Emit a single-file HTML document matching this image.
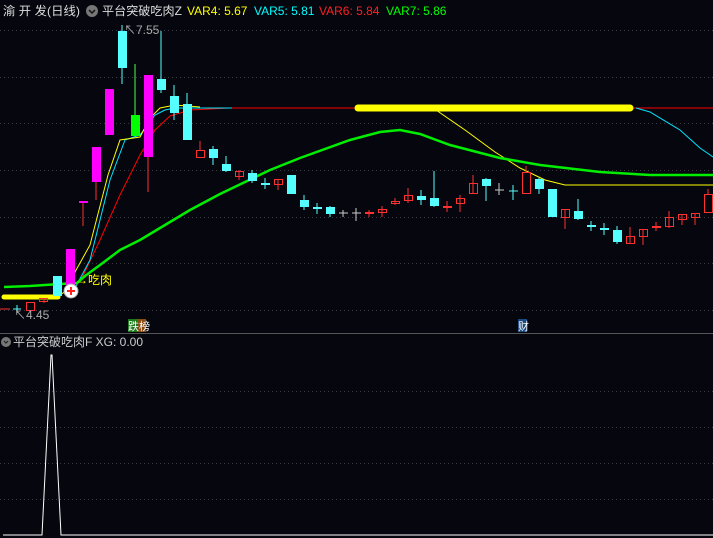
<!DOCTYPE html>
<html><head><meta charset="utf-8"><style>
html,body{margin:0;padding:0;background:#05060e;width:713px;height:538px;overflow:hidden}
svg{display:block}
text{font-family:"Liberation Sans","Noto Sans CJK SC",sans-serif}
</style></head><body>
<svg width="713" height="538" viewBox="0 0 713 538" xmlns="http://www.w3.org/2000/svg">
<rect width="713" height="538" fill="#05060e"/>
<g stroke="#3a3a44" stroke-dasharray="1,3" stroke-width="1">
<line x1="0" y1="30.5" x2="713" y2="30.5"/><line x1="0" y1="77.5" x2="713" y2="77.5"/>
<line x1="0" y1="123.5" x2="713" y2="123.5"/><line x1="0" y1="170.5" x2="713" y2="170.5"/>
<line x1="0" y1="217.5" x2="713" y2="217.5"/><line x1="0" y1="263.5" x2="713" y2="263.5"/>
<line x1="0" y1="310.5" x2="713" y2="310.5"/>
<line x1="0" y1="391.5" x2="713" y2="391.5"/><line x1="0" y1="427.5" x2="713" y2="427.5"/>
<line x1="0" y1="463.5" x2="713" y2="463.5"/><line x1="0" y1="499.5" x2="713" y2="499.5"/>
</g>
<line x1="0" y1="333.5" x2="713" y2="333.5" stroke="#555" stroke-width="1"/>
<!-- header -->
<text x="3" y="15" font-size="12" fill="#ddd" textLength="77" lengthAdjust="spacingAndGlyphs">渝 开 发(日线)</text>
<circle cx="92" cy="11" r="6" fill="#777"/><path d="M89 10l3 3 3-3" stroke="#111" stroke-width="1.5" fill="none"/>
<text x="102" y="15" font-size="12" fill="#ddd" textLength="80" lengthAdjust="spacingAndGlyphs">平台突破吃肉Z</text>
<text x="187" y="15" font-size="12" fill="#ffff00">VAR4: 5.67</text>
<text x="254" y="15" font-size="12" fill="#00ffff">VAR5: 5.81</text>
<text x="319" y="15" font-size="12" fill="#ff2020">VAR6: 5.84</text>
<text x="386" y="15" font-size="12" fill="#00ff00">VAR7: 5.86</text>
<!-- lines -->
<polyline fill="none" stroke="#ff0000" stroke-width="1" points="80,282 100,240 120,195 140,155 155,130 170,116 190,110 230,108 713,108"/>
<polyline fill="none" stroke="#00e5ff" stroke-width="1" points="75,288 90,260 110,180 125,140 140,135 155,115 165,110 175,108 232,108"/>
<polyline fill="none" stroke="#00e5ff" stroke-width="1" points="636,108 650,112 680,130 700,148 713,157"/>
<polyline fill="none" stroke="#ffff00" stroke-width="1" points="4,298 55,297 65,292 75,272 90,245 108,175 120,140 140,137 150,118 160,108 175,105 200,107"/>
<polyline fill="none" stroke="#ffff00" stroke-width="1" points="436,110 465,130 495,152 520,168 545,180 565,185 713,185"/>
<polyline fill="none" stroke="#00ee00" stroke-width="2.5" points="4,287 30,286 60,284 77,283 85,276 100,265 120,250 140,240 160,228 190,210 220,194 245,182 270,170 300,158 350,140 380,132 400,130 420,134 450,145 500,158 540,165 600,172 650,175 713,175"/>
<line x1="358" y1="108" x2="630" y2="108" stroke="#ffff00" stroke-width="7" stroke-linecap="round"/>
<line x1="4" y1="297" x2="58" y2="297" stroke="#ffff00" stroke-width="5" stroke-linecap="round"/>
<!-- candles -->
<g stroke-width="1">
<line x1="0" y1="309" x2="10" y2="309" stroke="#ff3030"/>
<line x1="17" y1="305" x2="17" y2="313" stroke="#5ff"/><line x1="13" y1="309" x2="21" y2="309" stroke="#5ff"/>
<rect x="26.5" y="302.5" width="8" height="8" fill="none" stroke="#ff3030"/>
<line x1="44" y1="298" x2="44" y2="303" stroke="#ff3030"/><rect x="39.5" y="298.5" width="8" height="3" fill="none" stroke="#ff3030"/>
<rect x="53" y="276" width="9" height="20" fill="#55ffff"/>
<rect x="66" y="249" width="9" height="36" fill="#ff00ff"/>
<line x1="83" y1="202" x2="83" y2="226" stroke="#ff3030"/><line x1="79" y1="202" x2="88" y2="202" stroke="#ff00ff" stroke-width="2"/>
<line x1="96" y1="180" x2="96" y2="200" stroke="#ff3030"/><rect x="92" y="147" width="9" height="35" fill="#ff00ff"/>
<rect x="105" y="89" width="9" height="46" fill="#ff00ff"/>
<line x1="122" y1="25" x2="122" y2="84" stroke="#55ffff"/><rect x="118" y="31" width="9" height="37" fill="#55ffff"/>
<line x1="135" y1="64" x2="135" y2="116" stroke="#55ff55"/><rect x="131" y="115" width="9" height="21" fill="#00ff00"/>
<line x1="148" y1="150" x2="148" y2="192" stroke="#ff3030"/><rect x="144" y="75" width="9" height="82" fill="#ff00ff"/>
<line x1="161" y1="31" x2="161" y2="93" stroke="#55ffff"/><rect x="157" y="79" width="9" height="11" fill="#55ffff"/>
<line x1="174" y1="85" x2="174" y2="120" stroke="#55ffff"/><rect x="170" y="96" width="9" height="17" fill="#55ffff"/>
<line x1="187" y1="93" x2="187" y2="140" stroke="#55ffff"/><rect x="183" y="104" width="9" height="36" fill="#55ffff"/>
<line x1="200" y1="141" x2="200" y2="150" stroke="#ff3030"/><rect x="196.5" y="150.5" width="8" height="7" fill="none" stroke="#ff3030"/>
<line x1="213" y1="146" x2="213" y2="165" stroke="#55ffff"/><rect x="209" y="149" width="9" height="9" fill="#55ffff"/>
<line x1="226" y1="156" x2="226" y2="172" stroke="#55ffff"/><rect x="222" y="164" width="9" height="7" fill="#55ffff"/>
<line x1="239" y1="170" x2="239" y2="180" stroke="#ff3030"/><rect x="235.5" y="171.5" width="8" height="5" fill="none" stroke="#ff3030"/>
<line x1="252" y1="170" x2="252" y2="183" stroke="#55ffff"/><rect x="248" y="173" width="9" height="8" fill="#55ffff"/>
<line x1="265" y1="178" x2="265" y2="189" stroke="#55ffff"/><line x1="261" y1="184" x2="270" y2="184" stroke="#55ffff" stroke-width="2"/>
<line x1="278" y1="179" x2="278" y2="190" stroke="#ff3030"/><rect x="274.5" y="179.5" width="8" height="5" fill="none" stroke="#ff3030"/>
<rect x="287" y="175" width="9" height="19" fill="#55ffff"/>
<line x1="304" y1="195" x2="304" y2="210" stroke="#55ffff"/><rect x="300" y="200" width="9" height="7" fill="#55ffff"/>
<line x1="317" y1="203" x2="317" y2="214" stroke="#55ffff"/><line x1="313" y1="208" x2="322" y2="208" stroke="#55ffff" stroke-width="2"/>
<line x1="330" y1="206" x2="330" y2="217" stroke="#55ffff"/><rect x="326" y="207" width="9" height="7" fill="#55ffff"/>
<line x1="343" y1="210" x2="343" y2="217" stroke="#ccc"/><line x1="339" y1="213" x2="348" y2="213" stroke="#ccc"/>
<line x1="356" y1="208" x2="356" y2="221" stroke="#ccc"/><line x1="352" y1="213" x2="361" y2="213" stroke="#ccc"/>
<line x1="369" y1="210" x2="369" y2="217" stroke="#ff3030"/><line x1="365" y1="213" x2="374" y2="213" stroke="#ff3030" stroke-width="2"/>
<line x1="382" y1="206" x2="382" y2="217" stroke="#ff3030"/><rect x="378.5" y="209.5" width="8" height="3" fill="none" stroke="#ff3030"/>
<line x1="395" y1="198" x2="395" y2="205" stroke="#ff3030"/><rect x="391.5" y="201.5" width="8" height="2" fill="none" stroke="#ff3030"/>
<line x1="408" y1="188" x2="408" y2="203" stroke="#ff3030"/><rect x="404.5" y="195.5" width="8" height="5" fill="none" stroke="#ff3030"/>
<line x1="421" y1="190" x2="421" y2="205" stroke="#55ffff"/><rect x="417" y="196" width="9" height="4" fill="#55ffff"/>
<line x1="434" y1="171" x2="434" y2="207" stroke="#55ffff"/><rect x="430" y="198" width="9" height="8" fill="#55ffff"/>
<line x1="447" y1="201" x2="447" y2="212" stroke="#ff3030"/><line x1="443" y1="207" x2="452" y2="207" stroke="#ff3030" stroke-width="2"/>
<line x1="460" y1="195" x2="460" y2="212" stroke="#ff3030"/><rect x="456.5" y="198.5" width="8" height="5" fill="none" stroke="#ff3030"/>
<line x1="473" y1="175" x2="473" y2="193" stroke="#ff3030"/><rect x="469.5" y="183.5" width="8" height="10" fill="none" stroke="#ff3030"/>
<line x1="486" y1="178" x2="486" y2="201" stroke="#55ffff"/><rect x="482" y="179" width="9" height="7" fill="#55ffff"/>
<line x1="499" y1="183" x2="499" y2="195" stroke="#ccc"/><line x1="495" y1="190" x2="504" y2="190" stroke="#ccc"/>
<line x1="513" y1="185" x2="513" y2="200" stroke="#55ffff"/><line x1="509" y1="191" x2="518" y2="191" stroke="#55ffff"/>
<line x1="526" y1="166" x2="526" y2="172" stroke="#ff3030"/><rect x="522.5" y="172.5" width="8" height="21" fill="none" stroke="#ff3030"/>
<line x1="539" y1="178" x2="539" y2="194" stroke="#55ffff"/><rect x="535" y="179" width="9" height="10" fill="#55ffff"/>
<rect x="548" y="189" width="9" height="28" fill="#55ffff"/>
<line x1="565" y1="209" x2="565" y2="229" stroke="#ff3030"/><rect x="561.5" y="209.5" width="8" height="8" fill="none" stroke="#ff3030"/>
<line x1="578" y1="199" x2="578" y2="220" stroke="#55ffff"/><rect x="574" y="211" width="9" height="8" fill="#55ffff"/>
<line x1="591" y1="221" x2="591" y2="231" stroke="#55ffff"/><line x1="587" y1="226" x2="596" y2="226" stroke="#55ffff" stroke-width="2"/>
<line x1="604" y1="223" x2="604" y2="235" stroke="#55ffff"/><line x1="600" y1="229" x2="609" y2="229" stroke="#55ffff" stroke-width="2"/>
<line x1="617" y1="226" x2="617" y2="244" stroke="#55ffff"/><rect x="613" y="230" width="9" height="12" fill="#55ffff"/>
<line x1="630" y1="227" x2="630" y2="243" stroke="#ff3030"/><rect x="626.5" y="236.5" width="8" height="7" fill="none" stroke="#ff3030"/>
<line x1="643" y1="229" x2="643" y2="245" stroke="#ff3030"/><rect x="639.5" y="229.5" width="8" height="7" fill="none" stroke="#ff3030"/>
<line x1="656" y1="222" x2="656" y2="231" stroke="#ff3030"/><line x1="652" y1="227" x2="661" y2="227" stroke="#ff3030" stroke-width="2"/>
<line x1="669" y1="211" x2="669" y2="228" stroke="#ff3030"/><rect x="665.5" y="217.5" width="8" height="9" fill="none" stroke="#ff3030"/>
<line x1="682" y1="214" x2="682" y2="225" stroke="#ff3030"/><rect x="678.5" y="214.5" width="8" height="5" fill="none" stroke="#ff3030"/>
<line x1="695" y1="213" x2="695" y2="225" stroke="#ff3030"/><rect x="691.5" y="213.5" width="8" height="4" fill="none" stroke="#ff3030"/>
<line x1="708" y1="189" x2="708" y2="194" stroke="#ff3030"/><rect x="704.5" y="194.5" width="8" height="18" fill="none" stroke="#ff3030"/>
</g>
<!-- annotations -->
<text x="124" y="34" font-size="12" fill="#aaa">↖7.55</text>
<text x="14" y="319" font-size="12" fill="#aaa">↖4.45</text>
<text x="76" y="284" font-size="12" fill="#ffff00">→吃肉</text>
<circle cx="71" cy="291" r="7" fill="#fff" stroke="#aaa"/>
<path d="M67 291h8M71 287v8" stroke="#ff2020" stroke-width="2"/>
<rect x="128" y="319" width="9" height="13" fill="#1a7a1a"/><rect x="137" y="319" width="9" height="13" fill="#8a4a10"/>
<text x="128" y="330" font-size="11" fill="#fff">跌榜</text>
<rect x="518" y="319" width="9" height="13" fill="#1a4a80"/>
<text x="518" y="330" font-size="11" fill="#fff">财</text>
<!-- lower panel -->
<circle cx="6" cy="342" r="5" fill="#777"/><path d="M4 341l2 2 2-2" stroke="#222" stroke-width="1.2" fill="none"/>
<text x="13" y="346" font-size="12" fill="#ccc">平台突破吃肉F  XG: 0.00</text>
<polyline fill="none" stroke="#fff" stroke-width="1" points="3,535 42,535 51,355 52,355 61,535 713,535"/>
</svg>
</body></html>
